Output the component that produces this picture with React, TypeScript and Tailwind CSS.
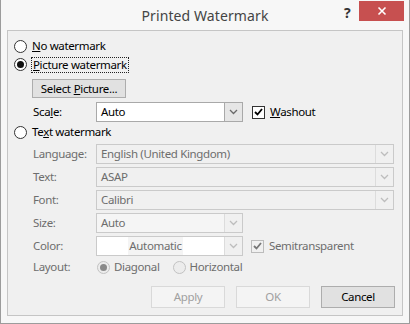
import React from "react";

const font = { fontFamily: '"Noto Sans", "Open Sans", sans-serif' };

function Chevron({ color }: { color: string }) {
  return (
    <svg width="9" height="6" viewBox="0 0 9 6">
      <path d="M1 1 L4.5 4.5 L8 1" fill="none" stroke={color} strokeWidth="1.3" />
    </svg>
  );
}

function Combo({
  text,
  width,
  enabled,
  bg,
  center,
}: {
  text: string;
  width: string;
  enabled?: boolean;
  bg?: string;
  center?: boolean;
}) {
  return (
    <div
      className={`flex h-[20px] ${width} border ${enabled ? "border-[#a9a9a9]" : "border-[#cacaca]"} ${bg ?? "bg-[#f0f0f0]"}`}
    >
      <div
        className={`flex-1 flex items-center ${center ? "justify-center pr-[10px]" : "pl-[4px]"} ${enabled ? "text-[#000]" : "text-[#6d6d6d]"}`}
      >
        {center ? <span className="bg-[#f4f4f4] px-[1px]">{text}</span> : text}
      </div>
      <div
        className={`w-[18px] flex items-center justify-center border-l ${enabled ? "border-[#a9a9a9] bg-[#e6e6e6]" : "border-[#dcdcdc] bg-[#f0f0f0]"}`}
      >
        <Chevron color={enabled ? "#6a6a6a" : "#bdbdbd"} />
      </div>
    </div>
  );
}

function Radio({ checked, disabled }: { checked?: boolean; disabled?: boolean }) {
  return (
    <div
      className={`w-[13px] h-[13px] rounded-full border flex items-center justify-center ${disabled ? "border-[#c2c2c2] bg-[#ececec]" : "border-[#333] bg-white"}`}
    >
      {checked && (
        <div className={`w-[7px] h-[7px] rounded-full ${disabled ? "bg-[#8a8a8a]" : "bg-[#111]"}`} />
      )}
    </div>
  );
}

function Check({ disabled }: { disabled?: boolean }) {
  return (
    <div
      className={`w-[13px] h-[13px] border flex items-center justify-center ${disabled ? "border-[#bcbcbc] bg-[#f0f0f0]" : "border-[#333] bg-white"}`}
    >
      <svg width="9" height="8" viewBox="0 0 9 8">
        <path
          d="M1 4 L3.5 6.5 L8 1"
          fill="none"
          stroke={disabled ? "#777" : "#000"}
          strokeWidth="1.8"
        />
      </svg>
    </div>
  );
}

function Row({ label, children }: { label: string; children: React.ReactNode }) {
  return (
    <div className="flex items-center">
      <div className="w-[63px] pl-[19px] box-content text-[#6d6d6d]">{label}</div>
      {children}
    </div>
  );
}

export default function App() {
  return (
    <div
      className="w-[410px] h-[324px] bg-[#f7f7f7] border-l border-r border-b border-[#9c9c9c] flex flex-col"
      style={font}
    >
      <div className="h-[30px] flex items-start relative">
        <div className="absolute left-0 right-0 top-[5px] text-center text-[14px] tracking-[0.1px] text-[#444]">
          Printed Watermark
        </div>
        <div className="absolute left-[343px] top-[2px] text-[14px] font-bold text-[#333]">?</div>
        <div className="absolute left-[358px] top-[1px] w-[45px] h-[20px] bg-[#c75050] flex items-center justify-center">
          <svg width="10" height="10" viewBox="0 0 10 10">
            <path d="M1.5 1.5 L8.5 8.5 M8.5 1.5 L1.5 8.5" stroke="white" strokeWidth="1.6" />
          </svg>
        </div>
      </div>
      <div className="ml-[6px] w-[396px] h-[286px] border border-[#c5c5c5] bg-[#f0f0f0] pl-[6px] pt-[6px] text-[11.5px] tracking-[-0.35px] text-black flex flex-col">
        <div className="h-[18px] flex items-center gap-[5px]">
          <Radio />
          <span>
            <u>N</u>o watermark
          </span>
        </div>
        <div className="h-[19px] flex items-center gap-[4px]">
          <Radio checked />
          <span className="border border-dotted border-[#222] px-[1px] leading-[14px]">
            <u>P</u>icture watermark
          </span>
        </div>
        <div className="mt-[5px] ml-[18px] w-[94px] h-[19px] bg-[#e1e1e1] border border-[#adadad] flex items-center justify-center">
          Select <u className="ml-[3px]">P</u>icture...
        </div>
        <div className="mt-[4px] flex items-center">
          <div className="w-[63px] pl-[19px] box-content">
            Sca<u>l</u>e:
          </div>
          <Combo text="Auto" width="w-[147px]" enabled bg="bg-white" />
          <div className="ml-[9px] flex items-center gap-[5px]">
            <Check />
            <span>
              <u>W</u>ashout
            </span>
          </div>
        </div>
        <div className="h-[20px] flex items-center gap-[5px]">
          <Radio />
          <span>
            Te<u>x</u>t watermark
          </span>
        </div>
        <div className="mt-[2px] flex flex-col gap-[3px]">
          <Row label="Language:">
            <Combo text="English (United Kingdom)" width="w-[298px]" />
          </Row>
          <Row label="Text:">
            <Combo text="ASAP" width="w-[298px]" />
          </Row>
          <Row label="Font:">
            <Combo text="Calibri" width="w-[298px]" />
          </Row>
          <Row label="Size:">
            <Combo text="Auto" width="w-[147px]" bg="bg-[#f5f5f5]" />
          </Row>
          <Row label="Color:">
            <Combo text="Automatic" width="w-[147px]" bg="bg-white" center />
            <div className="ml-[8px] flex items-center gap-[5px]">
              <Check disabled />
              <span className="text-[#6d6d6d]">Semitransparent</span>
            </div>
          </Row>
        </div>
        <div className="h-[22px] flex items-center">
          <div className="w-[63px] pl-[19px] box-content text-[#6d6d6d]">Layout:</div>
          <div className="flex items-center gap-[4px] ml-[1px]">
            <Radio checked disabled />
            <span className="text-[#6d6d6d]">Diagonal</span>
          </div>
          <div className="flex items-center gap-[4px] ml-[13px]">
            <Radio disabled />
            <span className="text-[#6d6d6d]">Horizontal</span>
          </div>
        </div>
        <div className="mt-[8px] flex justify-end gap-[11px] pr-[7px]">
          <div className="w-[74px] h-[22px] border border-[#d9d9d9] bg-[#f4f4f4] text-[#a0a0a0] flex items-center justify-center">
            Apply
          </div>
          <div className="w-[74px] h-[22px] border border-[#d9d9d9] bg-[#f4f4f4] text-[#a0a0a0] flex items-center justify-center">
            OK
          </div>
          <div className="w-[74px] h-[22px] border border-[#adadad] bg-[#e1e1e1] flex items-center justify-center">
            Cancel
          </div>
        </div>
      </div>
    </div>
  );
}
